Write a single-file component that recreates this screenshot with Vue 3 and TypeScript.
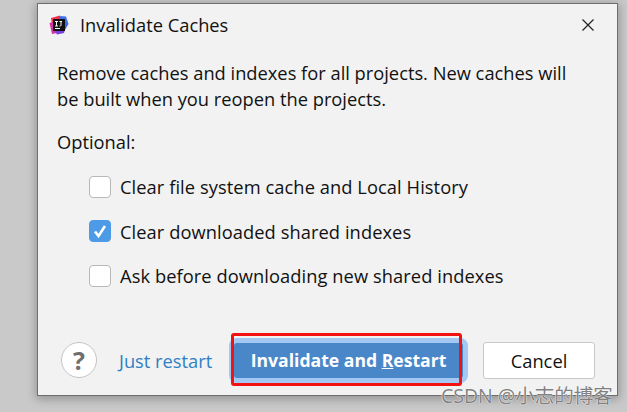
<script setup lang="ts">
const options = [
  { label: 'Clear file system cache and Local History', checked: false },
  { label: 'Clear downloaded shared indexes', checked: true },
  { label: 'Ask before downloading new shared indexes', checked: false },
]
</script>

<template>
  <div class="page">
    <section class="dialog">
      <header class="titlebar">
        <svg class="logo" width="20" height="20" viewBox="0 0 20 20">
          <path d="M2 3 L11 0.5 L12 6 L3 10 Z" fill="#f0304f" />
          <path d="M10 1 L17 1.5 L19.5 9 L16 15 L12 8 Z" fill="#3d6fe8" />
          <path d="M0.5 8 L6 6 L8 18 L3 19 Z" fill="#d632a8" />
          <path d="M6 16 L17 11 L15 18 L8 19.5 Z" fill="#7a3fe0" />
          <rect x="4" y="4" width="12" height="12" fill="#111" />
          <rect x="6" y="13" width="5" height="1" fill="#fff" />
          <path d="M6 6.5 H9 M7.5 6.5 V11 M6 11 H9 M10.5 6.5 H13 M12 6.5 V10.5 Q12 11 10.5 11" stroke="#fff" stroke-width="1" fill="none" />
        </svg>
        <span class="title">Invalidate Caches</span>
        <svg class="close" width="14" height="14" viewBox="0 0 14 14">
          <path d="M1.5 1.5 L12.5 12.5 M12.5 1.5 L1.5 12.5" stroke="#222" stroke-width="1.2" />
        </svg>
      </header>

      <main class="body">
        <p class="message">Remove caches and indexes for all projects. New caches will<br />be built when you reopen the projects.</p>
        <p class="optional">Optional:</p>
        <ul class="options">
          <li v-for="o in options" :key="o.label" class="option">
            <span class="box" :class="{ on: o.checked }">
              <svg v-if="o.checked" width="22" height="22" viewBox="0 0 22 22">
                <path d="M6 11.5 L9.5 16 L16 6" stroke="#fff" stroke-width="2.6" fill="none" />
              </svg>
            </span>
            <span>{{ o.label }}</span>
          </li>
        </ul>
      </main>

      <footer class="footer">
        <span class="help">?</span>
        <a class="link">Just restart</a>
        <button class="btn primary">Invalidate and <u>R</u>estart</button>
        <button class="btn cancel">Cancel</button>
      </footer>
    </section>
    <span class="watermark">CSDN @小志的博客</span>
  </div>
</template>

<style>
html, body { margin: 0; background: #c9c9c9; }
</style>

<style scoped>
.page {
  position: relative;
  width: 627px;
  height: 412px;
  overflow: hidden;
  padding: 3px 0 0 37px;
  box-sizing: border-box;
  background: #c9c9c9;
  font-family: "Open Sans", "Noto Sans CJK SC", sans-serif;
  color: #111;
}
.dialog {
  width: 581px;
  height: 393px;
  box-sizing: border-box;
  background: #f2f2f2;
  border: 1px solid #6e6e6e;
  box-shadow: 0 2px 9px 1px rgba(0, 0, 0, 0.28);
  display: flex;
  flex-direction: column;
}
.titlebar {
  display: flex;
  align-items: center;
  height: 41px;
  padding: 0 22px 0 11px;
  flex: none;
}
.logo { flex: none; }
.title {
  margin-left: 11px;
  font-size: 18.3px;
  flex: 1;
}
.close { flex: none; }
.body {
  flex: 1;
  padding: 15px 19px 0;
  font-size: 18.3px;
}
.message {
  margin: 0;
  line-height: 26px;
}
.optional {
  margin: 17px 0 0;
  line-height: 26px;
}
.options {
  list-style: none;
  margin: 18.5px 0 0;
  padding: 0 0 0 32px;
  display: flex;
  flex-direction: column;
  gap: 18.5px;
  letter-spacing: 0.07px;
}
.option {
  display: flex;
  align-items: center;
  gap: 9px;
  height: 26px;
}
.box {
  width: 22px;
  height: 22px;
  box-sizing: border-box;
  background: #fff;
  border: 1.5px solid #b8b8b8;
  border-radius: 4px;
  flex: none;
  position: relative;
}
.box.on {
  background: #4d9ae6;
  border-color: #4d9ae6;
}
.box svg { position: absolute; left: -1.5px; top: -1.5px; }
.footer {
  display: flex;
  align-items: center;
  height: 36px;
  padding: 0 21px 0 23px;
  margin-bottom: 17px;
  flex: none;
}
.help {
  width: 36px;
  height: 36px;
  box-sizing: border-box;
  border: 1px solid #c4c4c4;
  border-radius: 50%;
  background: #fff;
  color: #6e6e6e;
  font-size: 25px;
  font-weight: 700;
  display: flex;
  align-items: center;
  justify-content: center;
  flex: none;
}
.link {
  margin-left: 22px;
  font-size: 18.3px;
  color: #2f7fc4;
  width: 115px;
  flex: none;
}
.btn {
  font-family: inherit;
  font-size: 18.3px;
  box-sizing: border-box;
  height: 36px;
  padding: 0;
  border-radius: 3px;
  flex: none;
}
.primary {
  width: 229px;
  height: 35px;
  background: #4a87c9;
  border: 0;
  color: #fff;
  font-weight: 700;
  font-size: 17.6px;
  box-shadow: 0 0 0 5px #a3c8f4;
  position: relative;
}
.primary::after {
  content: "";
  position: absolute;
  left: -3px;
  top: -10px;
  right: 1px;
  bottom: -8px;
  border: 3px solid #f21212;
  border-radius: 3px;
}
.cancel {
  margin-left: 20px;
  width: 112px;
  height: 37px;
  background: #fff;
  border: 1.5px solid #c8c8c8;
  color: #111;
}
.watermark {
  position: absolute;
  left: 441px;
  top: 383px;
  font-size: 19.5px;
  line-height: 26px;
  color: rgba(105, 105, 105, 0.85);
  text-shadow: 0 0 1px #fff, 0 0 1px #fff;
  white-space: nowrap;
}
</style>
